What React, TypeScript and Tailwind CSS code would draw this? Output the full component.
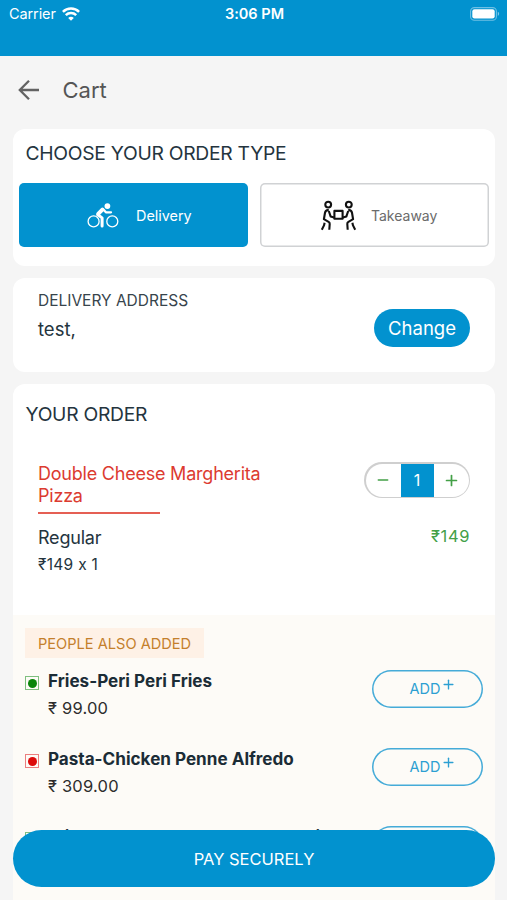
import { Minus, Plus } from "lucide-react";

const suggestions = [
  { id: 1, name: "Fries-Peri Peri Fries", price: "₹ 99.00", veg: true },
  { id: 2, name: "Pasta-Chicken Penne Alfredo", price: "₹ 309.00", veg: false },
  { id: 3, name: "Fries-Sour Cream and Pepperoni", price: "₹ 129.00", veg: true },
];

function WifiIcon() {
  return (
    <svg width="18" height="14" viewBox="0 0 18 14" fill="none" stroke="white" strokeWidth="2.5">
      <path d="M.9 4.9C5.4 .4 12.6 .4 17.1 4.9" />
      <path d="M3.8 8.2C6.7 5.4 11.3 5.4 14.2 8.2" />
      <path d="M9 13.8 6.2 10.9C7.8 9.4 10.2 9.4 11.8 10.9Z" fill="white" stroke="none" />
    </svg>
  );
}

function BatteryIcon() {
  return (
    <svg width="30" height="14" viewBox="0 0 30 14">
      <rect x=".6" y=".6" width="25.8" height="12.6" rx="3.8" fill="none" stroke="#6fc0e4" strokeWidth="1.1" />
      <rect x="2.3" y="2.3" width="22.4" height="9.2" rx="2.2" fill="white" />
      <path d="M27.8 4.8v4.2c1.8-.7 1.8-3.5 0-4.2Z" fill="#7fc8e8" />
    </svg>
  );
}

function BackIcon() {
  return (
    <svg width="22" height="22" viewBox="0 0 22 22" fill="none" stroke="#636363" strokeWidth="2.3">
      <path d="M21 11H2.5M11 1.7 1.8 11l9.2 9.3" />
    </svg>
  );
}

function CyclistIcon() {
  return (
    <svg width="32" height="26" viewBox="0 0 32 26" fill="none" stroke="white" strokeLinecap="round" strokeLinejoin="round">
      <circle cx="20.4" cy="4.1" r="2.9" fill="white" stroke="none" />
      <circle cx="6.6" cy="19.4" r="5.5" strokeWidth="1.3" />
      <circle cx="25.3" cy="19.4" r="5.5" strokeWidth="1.3" />
      <path d="M15.4 7.7 11.2 11.9" strokeWidth="4" />
      <path d="M16.4 7.5 18.9 10.3H24" strokeWidth="2.3" />
      <path d="M10.8 12.8 15.1 15.9V23.9" strokeWidth="3" />
    </svg>
  );
}

function Carrier() {
  return (
    <>
      <circle cx="8.2" cy="5.6" r="2.9" />
      <path d="M14.2 18.6 10.6 17.4 8.8 12" />
      <path d="M8.8 11.2C6.4 10.8 5.4 11.8 5 13.8L3.9 20.2 8.6 22.8C9.6 23.4 9.8 24 9.7 25L9.3 30.8" />
      <path d="M4.6 23.8 4 26.4 1.8 30.8" />
    </>
  );
}

function TakeawayIcon() {
  return (
    <svg width="37" height="33" viewBox="0 0 37 33" fill="none" stroke="#111" strokeWidth="2.1" strokeLinejoin="round">
      <Carrier />
      <g transform="matrix(-1 0 0 1 37 0)">
        <Carrier />
      </g>
      <rect x="14.4" y="11.9" width="8.2" height="7.8" />
    </svg>
  );
}

export default function App() {
  return (
    <div className="relative h-[900px] w-[507px] overflow-hidden bg-[#f5f5f5] font-['Inter','Noto_Sans',sans-serif] text-[#24343e] [font-feature-settings:'calt'_0]">
      <div className="h-14 bg-[#0292cf] text-white">
        <div className="grid h-7 grid-cols-3 items-center pl-[9px] pr-[7px]">
          <div className="flex items-center gap-1.5">
            <span className="text-[14.5px] tracking-[-0.1px]">Carrier</span>
            <WifiIcon />
          </div>
          <span className="text-center text-[14.5px] font-semibold">3:06 PM</span>
          <div className="flex justify-end">
            <BatteryIcon />
          </div>
        </div>
      </div>

      <header className="flex h-[73px] items-center gap-[22.5px] pb-[6px] pl-[18px]">
        <BackIcon />
        <h1 className="text-[22px] leading-7 text-[#555]">Cart</h1>
      </header>

      <main className="flex flex-col gap-3 pl-[13px] pr-3">
        <section className="h-[137px] rounded-xl bg-white px-1.5 pt-3">
          <h2 className="pl-[6.5px] text-[19.3px] leading-6 tracking-[-0.28px]">CHOOSE YOUR ORDER TYPE</h2>
          <div className="mt-[18px] grid grid-cols-2 gap-3">
            <button className="flex h-16 items-center rounded-[5px] bg-[#0292cf] pl-[68px] text-[14.4px] text-white">
              <CyclistIcon />
              <span className="ml-[17px] mt-[2px]">Delivery</span>
            </button>
            <button className="flex h-16 items-center rounded-[5px] bg-white pl-[60px] text-[14px] text-[#6b6b6b] shadow-[inset_0_0_0_1.5px_#d0d2d4]">
              <TakeawayIcon />
              <span className="ml-[14px]">Takeaway</span>
            </button>
          </div>
        </section>

        <section className="flex h-[94px] justify-between rounded-xl bg-white px-[25px]">
          <div className="pt-[13px]">
            <h3 className="text-[15.5px] leading-5 text-[#37444c]">DELIVERY ADDRESS</h3>
            <p className="mt-[6px] text-[18.5px] leading-6">test,</p>
          </div>
          <button className="mt-[31px] h-[38px] w-[96px] rounded-full bg-[#0292cf] pt-[2px] text-[18.5px] text-white">Change</button>
        </section>

        <section className="h-[600px] rounded-t-xl bg-white">
          <h2 className="pl-[12.5px] pt-[18px] text-[19.3px] leading-6 tracking-[-0.28px]">YOUR ORDER</h2>
          <div className="flex h-[189px] justify-between px-[25px] pt-[36px]">
            <div>
              <h3 className="mt-[1px] w-[240px] text-[18px] leading-[22px] tracking-[-0.22px] text-[#dc3b30]">
                Double Cheese Margherita Pizza
              </h3>
              <div className="mt-[5px] h-[2px] w-[122px] bg-[#e55f54]" />
              <p className="mt-[12px] text-[18px] leading-6 tracking-[-0.2px]">Regular</p>
              <p className="mt-[3px] text-[15.5px] leading-6 tracking-[0.3px]">₹149 x 1</p>
            </div>
            <div className="flex flex-col items-end">
              <div className="h-9 w-[106px] rounded-full bg-[#cfcfcf] p-[1.5px]">
                <div className="flex h-full overflow-hidden rounded-full bg-white">
                  <button className="flex flex-1 items-center justify-center text-[#43a047]">
                    <Minus size={16} strokeWidth={2.4} />
                  </button>
                  <span className="flex w-[33px] items-center justify-center bg-[#0292cf] text-[16px] text-white">1</span>
                  <button className="flex flex-1 items-center justify-center text-[#43a047]">
                    <Plus size={17} strokeWidth={2.4} />
                  </button>
                </div>
              </div>
              <p className="mt-[26px] text-[16.5px] leading-6 tracking-[0.6px] text-[#43a047]">₹149</p>
            </div>
          </div>

          <div className="h-[369px] bg-[#fdfbf7] px-3 pt-[13px]">
            <div className="flex h-[30px] w-[179px] items-center bg-[#fef1e6] pl-[13px] pt-[3px] text-[14.6px] text-[#c47f2c]">
              PEOPLE ALSO ADDED
            </div>
            {suggestions.map((item) => (
              <div key={item.id} className="flex h-[78px] items-start pt-[11px]">
                <div
                  className={`mt-[7px] flex h-[14px] w-[14px] items-center justify-center border ${item.veg ? "border-[#7fbf7f]" : "border-[#ec7f7f]"}`}
                >
                  <div className={`h-[9px] w-[9px] rounded-full ${item.veg ? "bg-[#0a850a]" : "bg-[#dc0b0b]"}`} />
                </div>
                <div className="ml-[9px] whitespace-nowrap">
                  <h4 className="text-[17.1px] font-bold leading-6 text-[#1b2c36]">{item.name}</h4>
                  <p className="mt-[3px] text-[16.5px] leading-6 tracking-[0.2px] text-[#2d2d2d]">{item.price}</p>
                </div>
                <button className="ml-auto mr-[0.5px] mt-px flex h-[38px] w-[111px] items-center rounded-full pl-[38px] text-[14.5px] text-[#2c9fd2] shadow-[inset_0_0_0_1.5px_#45abd8]">
                  ADD
                  <Plus size={15} strokeWidth={2.2} className="mb-[10px] ml-px" />
                </button>
              </div>
            ))}
          </div>
        </section>
      </main>

      <button className="absolute bottom-[13px] left-[13px] h-[57px] w-[482px] rounded-full bg-[#0292cf] pt-[2px] text-[16.5px] text-white">
        PAY SECURELY
      </button>
    </div>
  );
}
